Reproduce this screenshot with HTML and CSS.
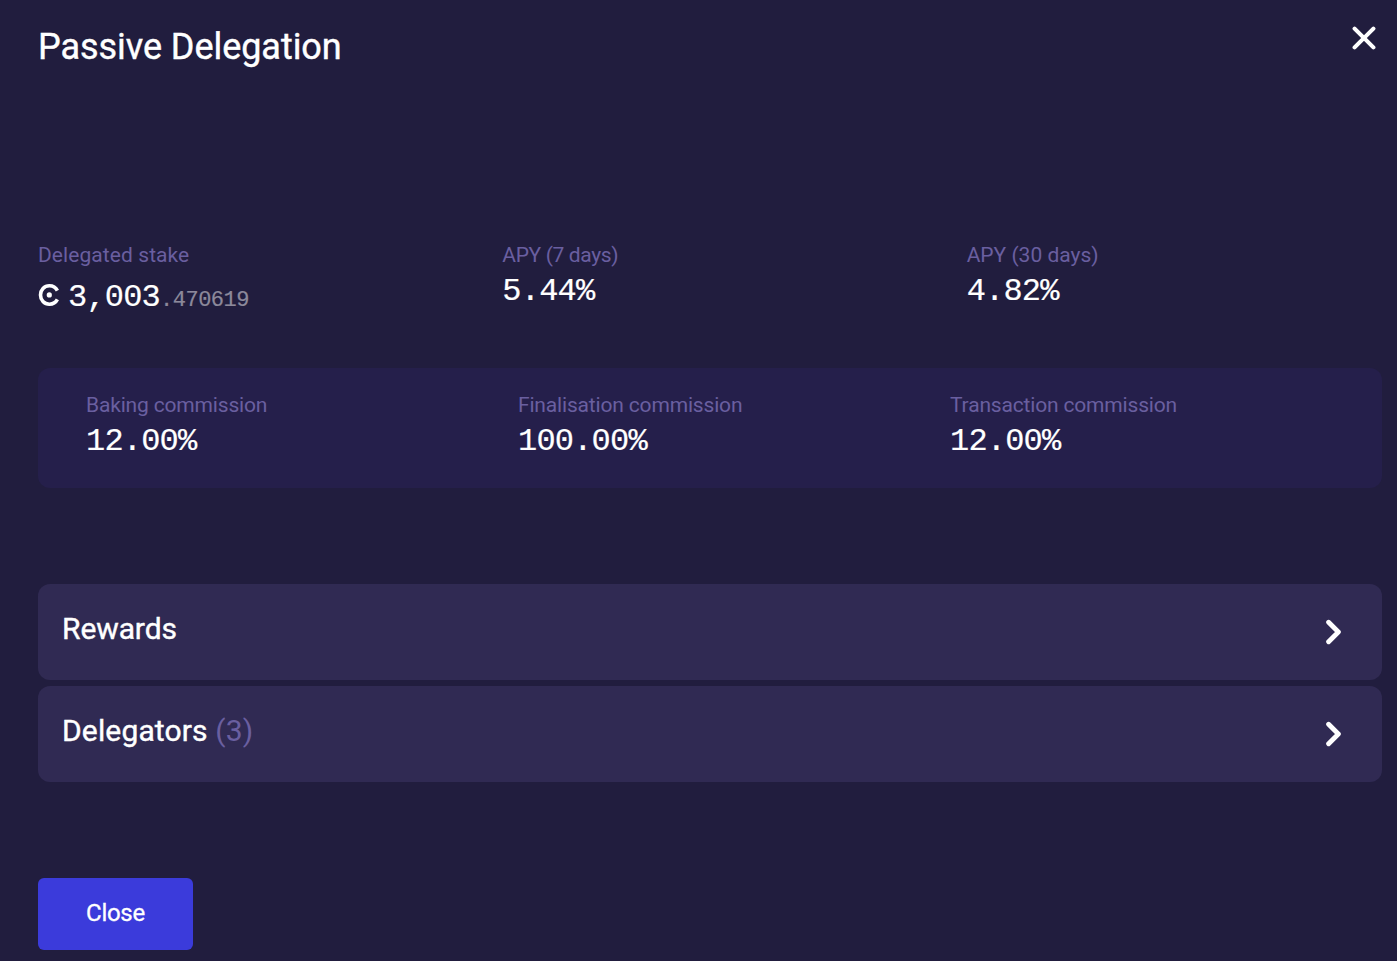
FILE: index.html
```html
<!DOCTYPE html>
<html lang="en">
<head>
<meta charset="utf-8">
<title>Passive Delegation</title>
<link rel="stylesheet" href="styles.css">
</head>
<body>
<main class="drawer">
  <header class="header">
    <h1 class="title">Passive Delegation</h1>
    <button class="dismiss" aria-label="Close panel">
      <svg width="24" height="24" viewBox="0 0 24 24"><path d="M2.6 2.6 21.4 21.4M21.4 2.6 2.6 21.4"/></svg>
    </button>
  </header>
  <section class="stats">
    <div><div class="label label-stake">Delegated stake</div>
      <div class="amount"><svg class="coin" width="22" height="24" viewBox="0 0 22 24"><path d="M19.4 7.6C17.9 4.7 15 2.8 11.4 2.8C6.2 2.8 2.5 6.9 2.5 12S6.2 21.2 11.4 21.2C15 21.2 17.9 19.3 19.4 16.4"/><circle cx="11.3" cy="11.9" r="2.6"/></svg><span class="value">3,003</span><span class="decimals">.470619</span></div></div>
    <div><div class="label label-week">APY (7 days)</div><div class="value">5.44%</div></div>
    <div><div class="label label-month">APY (30 days)</div><div class="value">4.82%</div></div>
  </section>
  <section class="commissions">
    <div><div class="label">Baking commission</div><div class="value">12.00%</div></div>
    <div><div class="label">Finalisation commission</div><div class="value">100.00%</div></div>
    <div><div class="label">Transaction commission</div><div class="value">12.00%</div></div>
  </section>
  <section class="panels">
    <div class="panel"><h2 class="panel-title panel-rewards">Rewards</h2><svg class="chevron" width="18" height="26" viewBox="0 0 18 26"><path d="M3.6 3.2 13.4 13 3.6 22.8"/></svg></div>
    <div class="panel"><h2 class="panel-title">Delegators <span class="count">(3)</span></h2><svg class="chevron" width="18" height="26" viewBox="0 0 18 26"><path d="M3.6 3.2 13.4 13 3.6 22.8"/></svg></div>
  </section>
  <button class="close">Close</button>
</main>
</body>
</html>
```
FILE: styles.css
```css
* { box-sizing: border-box; }
body { margin: 0; background: #211d3e; color: #fff; font-family: Roboto, "Liberation Sans", sans-serif; }
button { border: 0; padding: 0; font: inherit; color: inherit; background: none; }
svg { display: block; fill: none; stroke: #fff; stroke-linecap: round; stroke-linejoin: round; }
.drawer { height: 961px; overflow: hidden; padding: 23px 15px 0 38px; display: flex; flex-direction: column; }
.header { display: flex; justify-content: space-between; align-items: flex-start; height: 220px; }
.title { margin: 0; font-size: 36px; line-height: 48px; font-weight: 400; letter-spacing: -0.05px; -webkit-text-stroke: 0.4px #fff; }
.dismiss { margin: 3px 6px 0 0; }
.dismiss svg { stroke-width: 4.1; }
.stats { display: grid; grid-template-columns: repeat(3, 1fr); column-gap: 49px; height: 125px; }
.label { color: #6a5fa0; font-size: 21px; line-height: 24px; letter-spacing: -0.17px; white-space: nowrap; }
.label-stake { letter-spacing: 0.08px; }
.label-week { letter-spacing: -0.35px; }
.label-month { letter-spacing: 0; }
.value { font-family: "Liberation Mono", monospace; font-size: 32px; line-height: 36px; letter-spacing: -0.8px; margin-top: 7px; -webkit-text-stroke: 0.2px #fff; }
.amount { display: flex; align-items: baseline; margin-top: 13px; }
.amount .value { margin: 0; }
.coin { margin-right: 8px; stroke-width: 3.6; stroke-linecap: butt; position: relative; top: 1px; }
.coin circle { fill: #fff; stroke: none; }
.decimals { font-family: "Liberation Mono", monospace; font-size: 22px; line-height: 36px; letter-spacing: -0.5px; color: #8c899b; -webkit-text-stroke: 0.2px #8c899b; }
.commissions { display: grid; grid-template-columns: repeat(3, 1fr); height: 120px; padding: 25px 0 0 48px; border-radius: 12px; background: #251f4b; }
.panels { display: flex; flex-direction: column; gap: 6px; margin-top: 96px; }
.panel { height: 96px; display: flex; align-items: center; justify-content: space-between; padding: 0 39px 0 24px; background: #302a53; border-radius: 12px; }
.panel-title { margin: 0 0 6px; font-size: 30px; line-height: 40px; font-weight: 400; letter-spacing: 0.15px; -webkit-text-stroke: 0.4px #fff; }
.panel-rewards { letter-spacing: -0.1px; }
.count { color: #6a5fa0; -webkit-text-stroke: 0; }
.chevron { stroke-width: 4.8; }
.close { width: 155px; height: 72px; margin-top: 96px; padding-bottom: 3px; border-radius: 6px; background: #3b3bdb; font-size: 24px; letter-spacing: -0.3px; -webkit-text-stroke: 0.3px #fff; }
```
